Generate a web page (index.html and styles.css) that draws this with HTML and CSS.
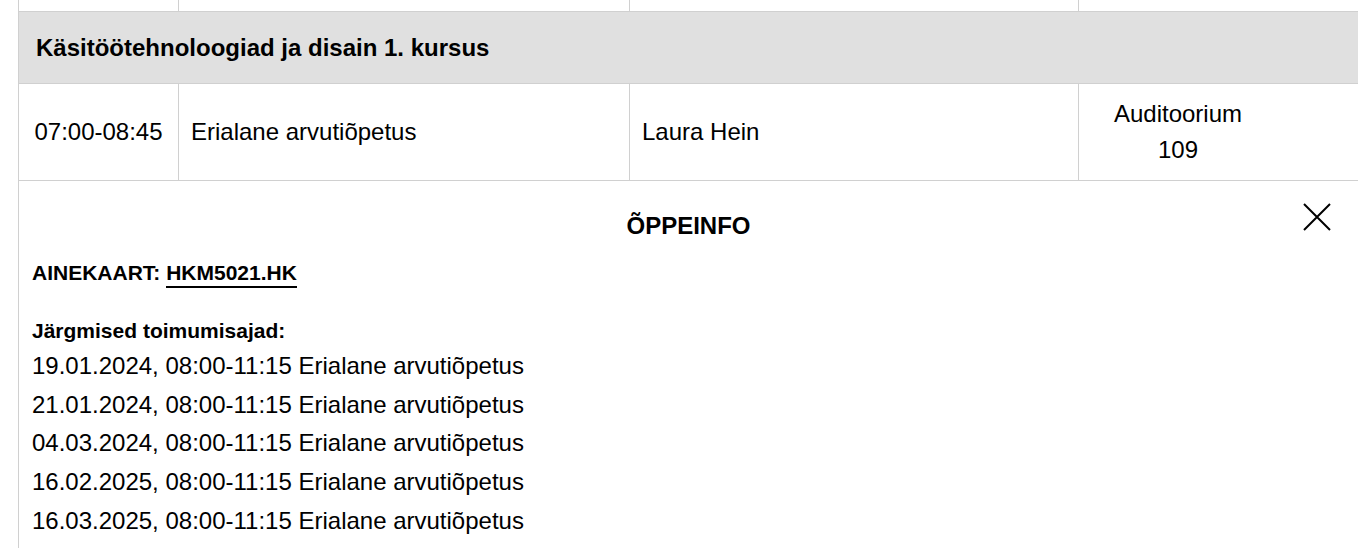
FILE: index.html
```html
<!DOCTYPE html>
<html lang="et">
<head>
<meta charset="utf-8">
<title>Tunniplaan</title>
<link rel="stylesheet" href="styles.css">
</head>
<body>
<div class="timetable">
  <div class="row row-prev">
    <div class="cell"></div>
    <div class="cell"></div>
    <div class="cell"></div>
    <div class="cell cell-last"></div>
  </div>
  <div class="group">Käsitöötehnoloogiad ja disain 1. kursus</div>
  <div class="row lesson">
    <div class="cell cell-time">07:00-08:45</div>
    <div class="cell">Erialane arvutiõpetus</div>
    <div class="cell">Laura Hein</div>
    <div class="cell cell-last"><div class="room">Auditoorium 109</div></div>
  </div>
  <div class="info">
    <div class="info-head">
      <div class="info-spacer"></div>
      <div class="info-title">ÕPPEINFO</div>
      <button class="close" type="button" aria-label="Sulge">
        <svg width="28" height="28" viewBox="0 0 28 28" aria-hidden="true">
          <path d="M1 1 L27 27 M27 1 L1 27" stroke="#000" stroke-width="2" fill="none"/>
        </svg>
      </button>
    </div>
    <div class="course-card">AINEKAART: <a class="course-link" href="#">HKM5021.HK</a></div>
    <div class="next-title">Järgmised toimumisajad:</div>
    <ul class="dates">
      <li>19.01.2024, 08:00-11:15 Erialane arvutiõpetus</li>
      <li>21.01.2024, 08:00-11:15 Erialane arvutiõpetus</li>
      <li>04.03.2024, 08:00-11:15 Erialane arvutiõpetus</li>
      <li>16.02.2025, 08:00-11:15 Erialane arvutiõpetus</li>
      <li>16.03.2025, 08:00-11:15 Erialane arvutiõpetus</li>
    </ul>
  </div>
</div>
</body>
</html>
```
FILE: styles.css
```css
html, body {
  margin: 0;
  padding: 0;
  overflow: hidden;
  background: #fff;
}

body {
  font-family: "Liberation Sans", Arial, sans-serif;
  color: #000;
}

.timetable {
  margin-left: 18px;
  border-left: 1px solid #d0d0d0;
  height: 548px;
}

.row {
  display: grid;
  grid-template-columns: 160px 451px 449px 1fr;
  border-bottom: 1px solid #d0d0d0;
}

.cell {
  border-right: 1px solid #d0d0d0;
}

.cell-last {
  border-right: none;
}

.row-prev {
  height: 11px;
}

.group {
  background: #e0e0e0;
  border-bottom: 1px solid #d0d0d0;
  font-size: 24px;
  font-weight: bold;
  line-height: 31px;
  padding: 20px 17px;
}

.lesson {
  font-size: 24px;
  line-height: 36px;
}

.lesson .cell {
  padding: 12px 12px;
  display: flex;
  align-items: center;
}

.lesson .cell-time {
  justify-content: center;
}

.room {
  width: 160px;
  margin-left: 7px;
  text-align: center;
}

.info {
  padding: 22px 13px 0 13px;
}

.info-head {
  display: grid;
  grid-template-columns: 1fr auto 1fr;
  align-items: start;
}

.info-title {
  padding-top: 9px;
  font-size: 24px;
  font-weight: bold;
  line-height: 28px;
}

.close {
  justify-self: end;
  margin: 0 14px 0 0;
  padding: 0;
  border: none;
  background: none;
  width: 28px;
  height: 28px;
  display: block;
  cursor: pointer;
}

.close svg {
  display: block;
}

.course-card {
  margin-top: 21px;
  font-size: 21px;
  font-weight: bold;
  line-height: 24px;
}

.course-link {
  color: #000;
  text-decoration: none;
  padding-bottom: 2px;
  border-bottom: 2px solid #000;
}

.next-title {
  margin-top: 34px;
  font-size: 21px;
  font-weight: bold;
  line-height: 24px;
}

.dates {
  list-style: none;
  margin: 4px 0 0 0;
  padding: 0;
  font-size: 24px;
  line-height: 38.7px;
}
```
